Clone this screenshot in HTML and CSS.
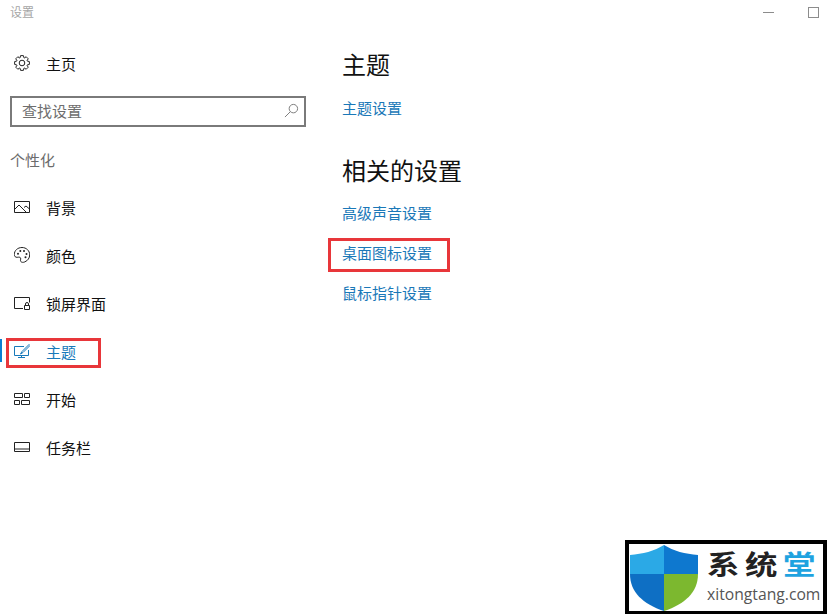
FILE: index.html
```html
<!DOCTYPE html>
<html>
<head>
    <meta charset="UTF-8">
    <title>设置</title>
    <link rel="stylesheet" href="styles.css">
</head>
<body>
    <div class="titlebar">
        <span class="app-title">设置</span>
        <div class="window-buttons">
            <span class="win-min"></span>
            <span class="win-max"></span>
        </div>
    </div>
    <div class="main">
        <div class="sidebar">
            <a class="nav-item home">
                <svg class="nav-icon" viewBox="0 0 16 16"><path transform="translate(8 8)" d="M-1.430-7.360H1.430L1.920-5.260 2.370-5.070 4.190-6.220 6.220-4.190 5.070-2.370 5.260-1.920 7.360-1.430V1.430L5.260 1.920 5.070 2.370 6.220 4.190 4.190 6.220 2.370 5.070 1.920 5.260 1.430 7.360H-1.430L-1.920 5.260-2.370 5.070-4.190 6.220-6.220 4.190-5.070 2.370-5.260 1.920-7.360 1.430V-1.430L-5.260-1.920-5.070-2.370-6.220-4.190-4.190-6.220-2.370-5.070-1.920-5.260z"/><circle cx="8" cy="8" r="2.800"/></svg>
                <span>主页</span>
            </a>
            <div class="search">
                <span class="search-text">查找设置</span>
                <svg class="search-icon" viewBox="0 0 16 16"><circle cx="10" cy="6" r="4.500"/><path d="M6.800 9.200 1 15"/></svg>
            </div>
            <div class="group-title">个性化</div>
            <a class="nav-item">
                <svg class="nav-icon" viewBox="0 0 16 16"><path d="M.5 2.500h15v11H.5z"/><path d="M.5 10.500 5 6l7.500 7.500M10 8.500l2-1.500 3.500 3"/></svg>
                <span>背景</span>
            </a>
            <a class="nav-item">
                <svg class="nav-icon" viewBox="0 0 16 16"><path d="M8 .5C3.600.5.300 3.600.300 7.500c0 1.900 1.300 3 2.900 2.800 1.700-.2 3-.4 3.400.8.400 1.300-.6 2.300.2 3.400.8 1 2.400 1.100 4 .4 3-1.300 4.900-3.900 4.900-7C15.700 3.800 12.400.5 8 .5z"/><g class="dots"><circle cx="4" cy="6.800" r="1"/><circle cx="6.300" cy="4" r="1"/><circle cx="10" cy="4" r="1"/><circle cx="12.500" cy="7" r="1"/><circle cx="11.500" cy="10.200" r="1"/></g></svg>
                <span>颜色</span>
            </a>
            <a class="nav-item">
                <svg class="nav-icon" viewBox="0 0 16 16"><path d="M9 13.500H.5v-11h15v5"/><path d="M10.500 10.500h5v4h-5zM11.500 10.500V9a1.500 1.500 0 0 1 3 0v1.500"/></svg>
                <span>锁屏界面</span>
            </a>
            <a class="nav-item active">
                <span class="active-bar"></span>
                <svg class="nav-icon" viewBox="0 0 16 16"><path d="M10 3.500H.5v9h14V7M7.500 12.500v2M4 14.500h7"/><path d="M15 1.500 8 8.500l-1.500 2.500 2.500-1.500 7-7z"/></svg>
                <span>主题</span>
                <span class="red-box nav-mark"></span>
            </a>
            <a class="nav-item">
                <svg class="nav-icon" viewBox="0 0 16 16"><path d="M.5 2.500h8v4h-8zM10.500 2.500h5v4h-5zM.5 9.500h5v4h-5zM7.500 9.500h8v4h-8z"/></svg>
                <span>开始</span>
            </a>
            <a class="nav-item">
                <svg class="nav-icon" viewBox="0 0 16 16"><path d="M.5 3.500h15v9H.5zM.5 10h15"/></svg>
                <span>任务栏</span>
            </a>
        </div>
        <div class="content">
            <h2 class="heading">主题</h2>
            <a class="link">主题设置</a>
            <h2 class="heading related">相关的设置</h2>
            <a class="link">高级声音设置</a>
            <a class="link">桌面图标设置<span class="red-box link-mark"></span></a>
            <a class="link">鼠标指针设置</a>
        </div>
    </div>
    <!-- watermark in the corner -->
    <div class="watermark">
        <svg class="shield" viewBox="2 1 64 66" preserveAspectRatio="none">
            <path fill="#2ba9e6" d="M34 1C25 7 14 10 2 11v19h32z"/>
            <path fill="#0e78cf" d="M34 1c9 6 20 9 32 10v19H34z"/>
            <path fill="#0e6fc4" d="M2 30c0 18 12 30 32 37V30z"/>
            <path fill="#7cb82f" d="M66 30c0 18-12 30-32 37V30z"/>
        </svg>
        <div class="brand">
            <div class="brand-name">系统<span class="brand-blue">堂</span></div>
            <div class="brand-url">xitongtang.com</div>
        </div>
    </div>
</body>
</html>
```

FILE: styles.css
```css
html, body {
    height: 100%;
}
body {
    margin: 0;
    background-color: #FFFFFF;
    color: #111111;
    font-family: "Noto Sans CJK SC", "Liberation Sans", sans-serif;
    font-size: 15px;
    overflow: hidden;
    position: relative;
}
.titlebar {
    display: flex;
    justify-content: space-between;
    height: 39px;
    padding-left: 10px;
}
.app-title {
    color: #a6a6a6;
    font-size: 12px;
    line-height: 23px;
}
.window-buttons {
    display: flex;
    align-items: flex-start;
}
.win-min {
    width: 11px;
    height: 1px;
    margin-top: 12px;
    margin-right: 34px;
    background-color: #8c8c8c;
}
.win-max {
    width: 9px;
    height: 9px;
    margin-top: 7px;
    margin-right: 8px;
    border: 1px solid #8c8c8c;
}
.main {
    display: flex;
}
.sidebar {
    width: 320px;
    flex-shrink: 0;
}
.nav-item {
    display: flex;
    align-items: center;
    gap: 16px;
    height: 48px;
    padding-left: 14px;
    position: relative;
}
.nav-icon {
    width: 16px;
    height: 16px;
    fill: none;
    stroke: #222222;
    stroke-width: 1;
    flex-shrink: 0;
}
.dots circle {
    fill: #222222;
    stroke: none;
}
.search {
    display: flex;
    justify-content: space-between;
    align-items: center;
    box-sizing: border-box;
    width: 296px;
    height: 31px;
    margin: 9px 0 0 10px;
    padding: 0 5px 2px 10px;
    border: 2px solid #7a7a7a;
}
.search-text {
    color: #6e6e6e;
}
.search-icon {
    width: 15px;
    height: 15px;
    fill: none;
    stroke: #777777;
    stroke-width: 1;
}
.group-title {
    margin: 21px 0 11px 10px;
    color: #6b6b6b;
    line-height: 24px;
}
.active {
    color: #1779ba;
}
.active .nav-icon {
    stroke: #1779ba;
}
.active-bar {
    position: absolute;
    left: 0;
    top: 12px;
    width: 2px;
    height: 23px;
    background-color: #0a7ed1;
}
.red-box {
    position: absolute;
    box-sizing: border-box;
    border: 3px solid #e8363a;
}
.nav-mark {
    left: 6px;
    top: 11px;
    width: 95px;
    height: 30px;
}
.content {
    padding-top: 5px;
    padding-left: 22px;
}
.heading {
    margin: 0 0 11px;
    font-size: 24px;
    font-weight: 400;
    line-height: 40px;
    color: #111111;
}
.related {
    margin: 15px 0 10px;
}
.link {
    display: block;
    position: relative;
    height: 40px;
    line-height: 26px;
    color: #1a78b8;
}
.link-mark {
    left: -14px;
    top: -2px;
    width: 122px;
    height: 34px;
}
.watermark {
    position: absolute;
    right: 0;
    bottom: 0;
    box-sizing: border-box;
    display: flex;
    gap: 9px;
    width: 202px;
    height: 74px;
    padding: 1px 0 0 1px;
    background-color: #FFFFFF;
    border: 4px solid #000000;
    border-bottom-width: 3px;
}
.shield {
    width: 68px;
    height: 66px;
    flex-shrink: 0;
}
.brand-name {
    font-size: 27px;
    font-weight: 700;
    line-height: 38px;
    letter-spacing: 4.700px;
    color: #222222;
    white-space: nowrap;
    transform: scaleX(1.2);
    transform-origin: left center;
}
.brand-blue {
    color: #1fa3e0;
}
.brand-url {
    font-family: "Open Sans", "Liberation Sans", sans-serif;
    font-size: 15.700px;
    line-height: 22px;
    color: #555555;
    white-space: nowrap;
}
```
